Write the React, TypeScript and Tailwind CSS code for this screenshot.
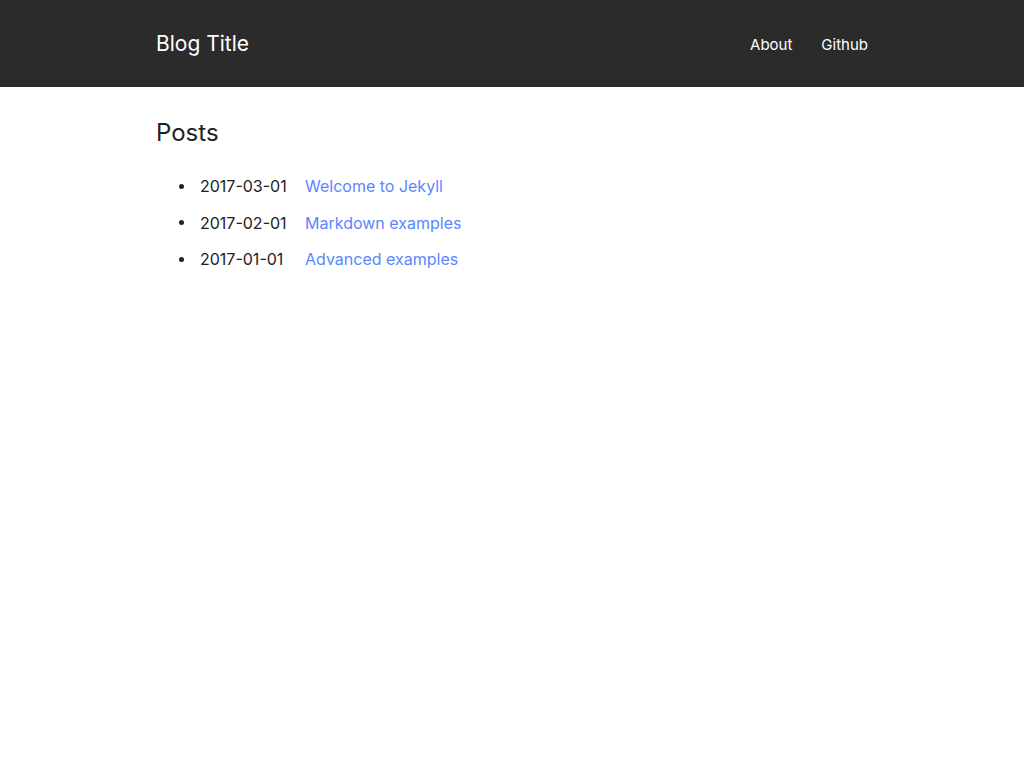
const posts = [
  { date: "2017-03-01", title: "Welcome to Jekyll" },
  { date: "2017-02-01", title: "Markdown examples" },
  { date: "2017-01-01", title: "Advanced examples" },
];

export default function App() {
  return (
    <div className="min-h-screen bg-white text-[#222] font-['Inter',sans-serif]">
      <header className="bg-[#2b2b2b] h-[87px]">
        <div className="w-[712px] mx-auto h-full flex items-center justify-between">
          <a href="#" className="text-[21px] text-white">Blog Title</a>
          <nav className="flex items-center gap-[29px] text-[15px] text-white mt-[3px]">
            <a href="#">About</a>
            <a href="#">Github</a>
          </nav>
        </div>
      </header>
      <main className="w-[712px] mx-auto pt-[31px]">
        <h2 className="text-[24px] leading-[30px]">Posts</h2>
        <ul className="pl-[23px] mt-[26px] text-[16px]">
          {posts.map((p) => (
            <li key={p.date} className="flex items-center leading-[24px] mb-[12.5px]">
              <span className="w-[5px] h-[5px] rounded-full bg-[#222] mr-[16px]" />
              <span className="w-[105px]">{p.date}</span>
              <a href="#" className="text-[#5b86ff]">{p.title}</a>
            </li>
          ))}
        </ul>
      </main>
    </div>
  );
}
